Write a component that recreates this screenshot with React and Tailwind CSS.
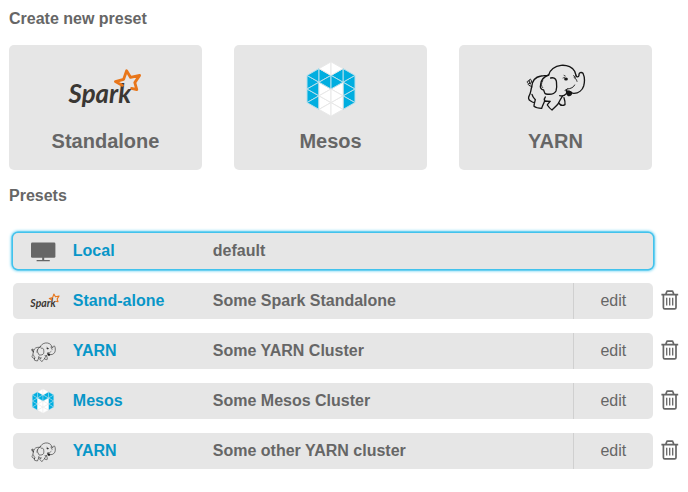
import React from "react";

function SparkLogo({ className }) {
  return (
    <svg viewBox="0 0 76 42" className={className}>
      <text
        x="0.6"
        y="34.6"
        fontSize="26.5"
        fontStyle="italic"
        fontWeight="700"
        textLength="62.5"
        lengthAdjust="spacingAndGlyphs"
        fill="#3a3733"
        className="font-[Lato,sans-serif]"
      >
        Spark
      </text>
      <path
        d="M54.5 17.4 L47.4 13.6 L55.6 11.4 L58.6 2.8 L62.6 9.4 L71.6 7.4 L66.8 14.6 L68.8 21.6 L63.6 20.4"
        fill="none"
        stroke="#e8761a"
        strokeWidth="2.8"
        strokeLinejoin="round"
        strokeLinecap="round"
      />
    </svg>
  );
}

const S = 13.6;
const W = 12;
const triangles = [];
[-1, 1].forEach((side) => {
  for (let i = 0; i < 2; i++) {
    const y = -S + i * S;
    triangles.push({ p: [[side * 2 * W, y], [side * 2 * W, y + S], [side * W, y + S / 2]], blue: true });
  }
  for (let i = 0; i < 3; i++) {
    const y = -1.5 * S + i * S;
    triangles.push({ p: [[side * W, y], [side * W, y + S], [side * 2 * W, y + S / 2]], blue: true });
    triangles.push({ p: [[side * W, y], [side * W, y + S], [0, y + S / 2]], blue: i === 0 });
  }
  for (let i = 0; i < 4; i++) {
    const y = -2 * S + i * S;
    triangles.push({ p: [[0, y], [0, y + S], [side * W, y + S / 2]], blue: i === 1 });
  }
});

function MesosLogo({ className }) {
  return (
    <svg viewBox="-26 -29 52 58" className={className}>
      {triangles.map((t, i) => (
        <polygon
          key={i}
          points={t.p.map((q) => q.join(",")).join(" ")}
          fill={t.blue ? "#00aee0" : "#ffffff"}
          stroke={t.blue ? "#b5dfec" : "#e8e8e8"}
          strokeWidth="1"
          strokeLinejoin="round"
        />
      ))}
    </svg>
  );
}

function ElephantLogo({ className }) {
  return (
    <svg viewBox="33 24 180 144" className={className} fill="none" stroke="#151515" strokeWidth="4" strokeLinecap="round" strokeLinejoin="round">
      <path d="M50 96 C51 80 60 66 78 63 C88 61 94 63 101 60 C104 45 120 33 138 31 C157 29 174 38 179 49 L183 61" />
      <path d="M183 61 C184 68 191 66 192 61 C191 53 199 50 204 55 C209 66 209 82 206 93 C202 106 190 115 177 115 C171 116 167 112 162 108" />
      <path d="M177 67 C182 70 185 75 186 79 M176 62 L182 67 M179 90 C176 97 168 101 157 102 M157 102 L150 106" strokeWidth="2.8" />
      <path d="M101 60 C87 65 78 76 77 88 C74 98 79 104 86 105 C88 109 87 116 93 117 C106 119 119 116 123 108 C127 97 125 87 124 78 C122 69 114 67 107 69" />
      <path d="M83 77 C78 85 78 94 83 98" strokeWidth="2.5" />
      <path d="M50 96 C47 107 47 116 43 121 C39 128 40 135 47 138 C51 141 55 143 59 143 M51 118 C53 126 57 130 61 134 C59 141 57 149 57 154 C63 159 74 160 80 160 C82 152 86 146 89 138 L105 139" />
      <path d="M89 138 C87 132 88 129 91 126 M105 139 C101 145 98 147 97 150 C101 156 106 162 111 165 C116 160 124 153 129 147 C133 139 137 131 142 124" />
      <path d="M131 144 C136 151 143 153 150 149 C151 141 149 134 147 128 M134 122 C143 125 150 121 154 116" />
      <path d="M50 94 C42 93 38 89 40 85 C34 82 37 76 43 78 C42 71 49 71 49 78 C51 84 46 85 43 86 M42 78 L46 87" strokeWidth="3" />
      <path d="M154 106 C157 111 165 108 169 112 C172 119 164 124 159 121 C155 118 154 112 154 106 Z" fill="#151515" />
      <ellipse cx="153" cy="72" rx="3.6" ry="2.8" fill="#151515" />
      <path d="M144 69 L149 67 M147 61 L151 63" strokeWidth="2.2" />
    </svg>
  );
}

function MonitorIcon() {
  return (
    <svg viewBox="0 0 26 20" className="mt-0.5 h-5 w-[26px]" fill="#666">
      <rect x="1" y="0.5" width="24.4" height="15.2" rx="1.3" />
      <rect x="12.2" y="15" width="2" height="4" />
      <rect x="6.5" y="18" width="13.4" height="1.3" rx="0.6" />
    </svg>
  );
}

function TrashIcon() {
  return (
    <svg viewBox="0 0 18 20" className="mb-0.5 h-5 w-[18px]" fill="none" stroke="#666" strokeWidth="1.7" strokeLinejoin="round">
      <path d="M0.4 4.6 H17.2 M4.8 4.4 L5.6 1.9 Q5.8 1.2 6.6 1.2 H11 Q11.8 1.2 12 1.9 L12.8 4.4 M2.4 4.8 V17.5 Q2.4 18.9 3.8 18.9 H13.6 Q15 18.9 15 17.5 V4.8" />
      <path d="M5.7 7.8 V15.6 M8.7 7.8 V15.6 M11.7 7.8 V15.6" strokeWidth="1.3" />
    </svg>
  );
}

const cards = [
  { name: "Standalone", logo: <SparkLogo className="h-[42px] w-[76px]" /> },
  { name: "Mesos", logo: <MesosLogo className="mb-px h-[58px] w-[52px]" /> },
  { name: "YARN", logo: <ElephantLogo className="mb-1 h-12 w-[60px]" /> },
];

const elephant = <ElephantLogo className="mt-px ml-0.5 h-5 w-[25px]" />;

const presets = [
  { type: "Local", name: "default", icon: <MonitorIcon />, selected: true },
  { type: "Stand-alone", name: "Some Spark Standalone", icon: <SparkLogo className="ml-[5px] h-[17px] w-[31px]" /> },
  { type: "YARN", name: "Some YARN Cluster", icon: elephant },
  { type: "Mesos", name: "Some Mesos Cluster", icon: <MesosLogo className="mb-px ml-px h-[26px] w-6" /> },
  { type: "YARN", name: "Some other YARN cluster", icon: elephant },
];

function PresetRow({ preset }) {
  return (
    <div className="flex items-center gap-2">
      <div
        className={
          "flex h-9 w-[640px] items-center rounded-[5px] bg-[#e6e6e6] " +
          (preset.selected ? "shadow-[0_0_0_1.5px_#42c2ec,0_0_3px_2px_#5ccdf0]" : "")
        }
      >
        <div className="flex w-[60px] justify-center">{preset.icon}</div>
        <div className="w-[140px] font-bold text-[#0896c8]">{preset.type}</div>
        <div className="grow font-bold">{preset.name}</div>
        {!preset.selected && (
          <button className="h-full w-20 border-l border-[#d0d0d0]">edit</button>
        )}
      </div>
      {!preset.selected && (
        <button aria-label="Delete">
          <TrashIcon />
        </button>
      )}
    </div>
  );
}

export default function App() {
  return (
    <main className="h-[492px] w-[688px] overflow-hidden bg-white px-[9px] pt-[7px] font-['Liberation_Sans',Arial,sans-serif] text-base leading-6 text-[#666]">
      <h2 className="font-bold">Create new preset</h2>
      <div className="mt-3.5 flex gap-8">
        {cards.map((c) => (
          <button key={c.name} className="flex h-[125px] w-[193px] flex-col items-center rounded-[5px] bg-[#e6e6e6]">
            <span className="flex h-[88px] items-center">{c.logo}</span>
            <span className="-mt-1 text-xl leading-6 font-bold">{c.name}</span>
          </button>
        ))}
      </div>
      <h2 className="mt-3.5 font-bold">Presets</h2>
      <div className="mt-[25px] ml-[3.8px] flex flex-col gap-3.5">
        {presets.map((p) => (
          <PresetRow key={p.name} preset={p} />
        ))}
      </div>
    </main>
  );
}
